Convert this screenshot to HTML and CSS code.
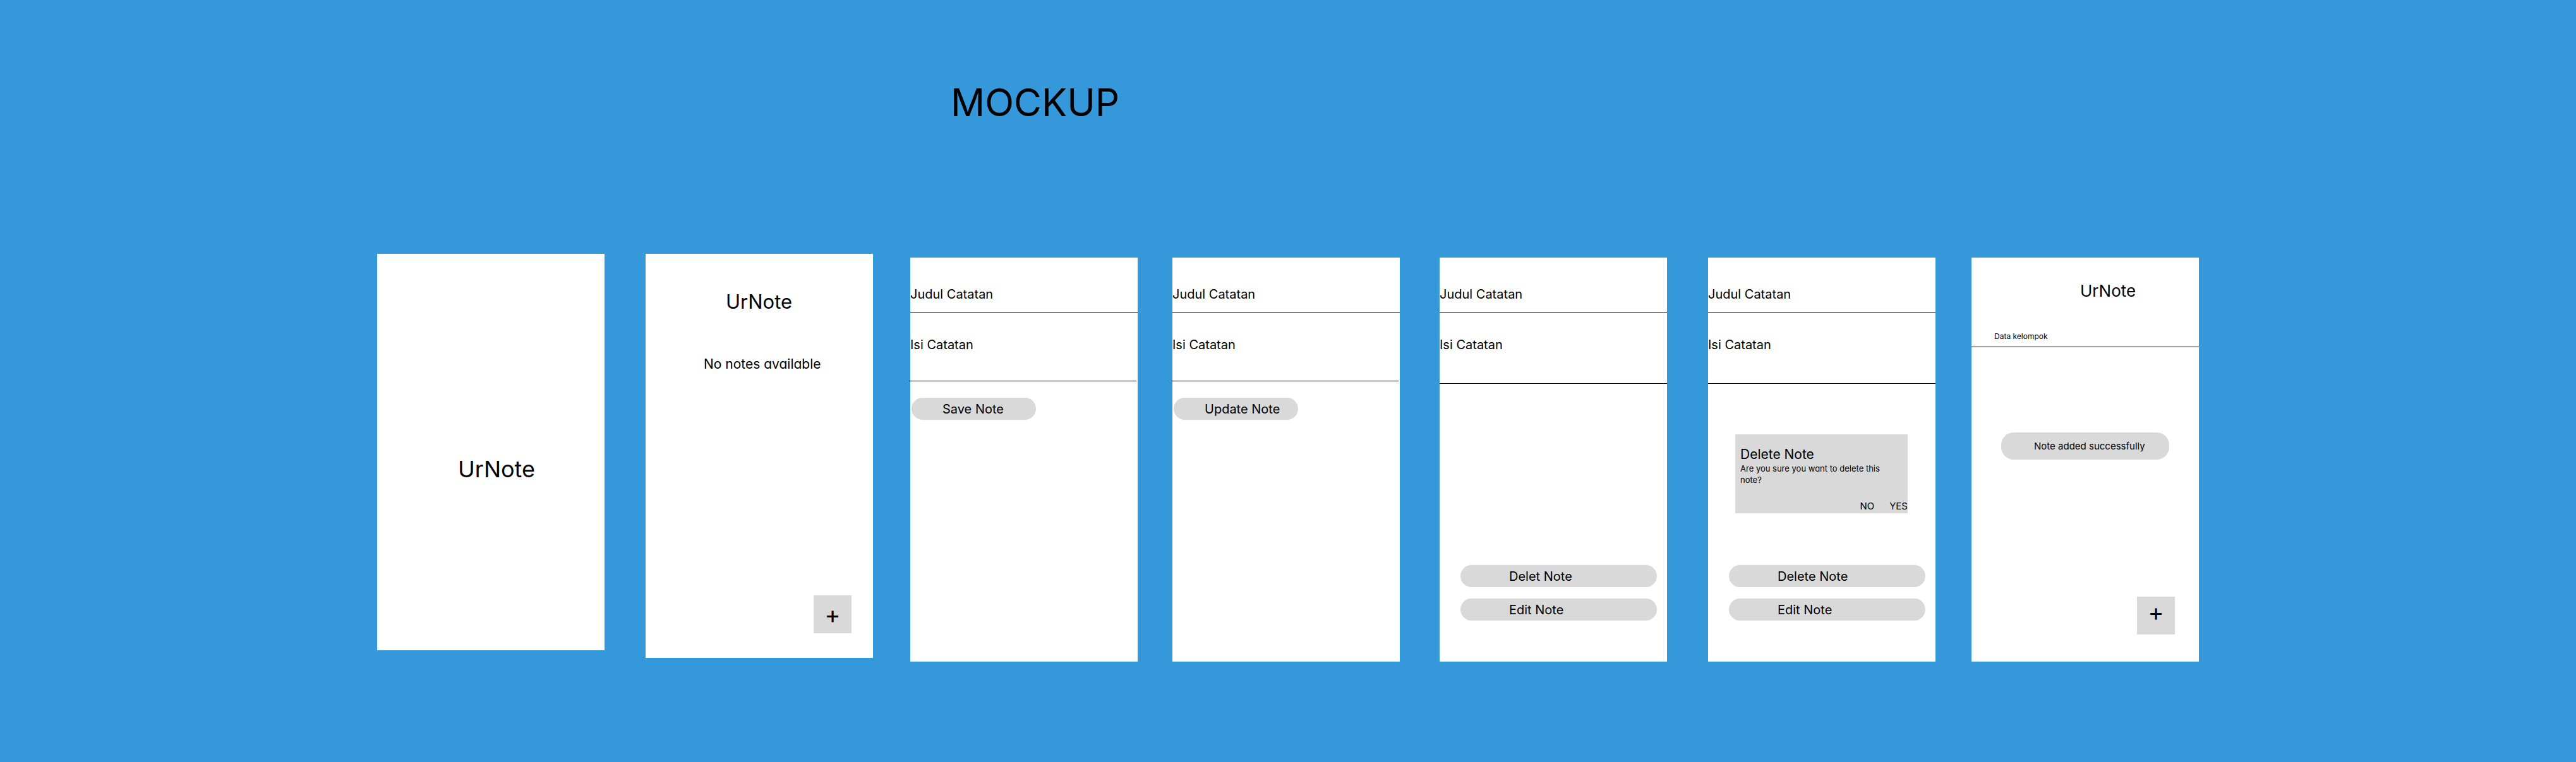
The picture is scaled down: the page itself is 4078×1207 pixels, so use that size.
FILE: index.html
```html
<!DOCTYPE html>
<html lang="id">
<head>
  <meta charset="utf-8">
  <meta name="viewport" content="width=device-width, initial-scale=1">
  <title>UrNote Mockup</title>
  <link rel="stylesheet" href="styles.css">
</head>
<body>
  <main class="board">
    <h1 class="board-title">MOCKUP</h1>

    <section class="screen screen-splash" aria-label="Splash">
      <h2 class="brand brand-large">UrNote</h2>
    </section>

    <section class="screen screen-home" aria-label="Home">
      <h2 class="brand brand-medium">UrNote</h2>
      <p class="empty-text">No notes available</p>
      <button class="add-button" type="button" aria-label="Add note">+</button>
    </section>

    <section class="screen screen-low" aria-label="Save note">
      <input class="field field-title" type="text" placeholder="Judul Catatan" aria-label="Judul Catatan">
      <input class="field field-body field-shifted" type="text" placeholder="Isi Catatan" aria-label="Isi Catatan">
      <button class="pill pill-short" type="button">Save Note</button>
    </section>

    <section class="screen screen-low" aria-label="Update note">
      <input class="field field-title" type="text" placeholder="Judul Catatan" aria-label="Judul Catatan">
      <input class="field field-body field-shifted" type="text" placeholder="Isi Catatan" aria-label="Isi Catatan">
      <button class="pill pill-short" type="button">Update Note</button>
    </section>

    <section class="screen screen-low" aria-label="Note actions">
      <input class="field field-title" type="text" placeholder="Judul Catatan" aria-label="Judul Catatan">
      <input class="field field-body field-tall" type="text" placeholder="Isi Catatan" aria-label="Isi Catatan">
      <div class="actions">
        <button class="pill" type="button">Delet Note</button>
        <button class="pill" type="button">Edit Note</button>
      </div>
    </section>

    <section class="screen screen-low" aria-label="Delete confirmation">
      <input class="field field-title" type="text" placeholder="Judul Catatan" aria-label="Judul Catatan">
      <input class="field field-body field-tall" type="text" placeholder="Isi Catatan" aria-label="Isi Catatan">
      <div class="dialog" role="dialog" aria-labelledby="dialog-title">
        <h3 class="dialog-title" id="dialog-title">Delete Note</h3>
        <p class="dialog-text">Are you sure you want to delete this note?</p>
        <div class="dialog-actions">
          <button class="dialog-button" type="button">NO</button>
          <button class="dialog-button" type="button">YES</button>
        </div>
      </div>
      <div class="actions">
        <button class="pill" type="button">Delete Note</button>
        <button class="pill" type="button">Edit Note</button>
      </div>
    </section>

    <section class="screen screen-low screen-list" aria-label="Note list">
      <h2 class="brand brand-small">UrNote</h2>
      <p class="list-item">Data kelompok</p>
      <p class="toast" role="status">Note added successfully</p>
      <button class="add-button add-button-raised" type="button" aria-label="Add note">+</button>
    </section>
  </main>
</body>
</html>
```
FILE: styles.css
```css
* {
  box-sizing: border-box;
}

body {
  margin: 0;
  min-height: 100vh;
  background: #3498db;
  color: #000;
  font-family: Inter, "Liberation Sans", sans-serif;
  font-size: 20px;
}

h1, h2, h3, p {
  margin: 0;
  font-weight: 400;
}

button, input {
  margin: 0;
  border: 0;
  border-radius: 0;
  color: inherit;
  font: inherit;
}

button {
  cursor: pointer;
}

.board {
  display: grid;
  grid-template-columns: 425px 419px 415px 423px 425px 417px 360px;
  justify-content: center;
  align-items: start;
  padding: 126px 0;
}

.board-title {
  grid-column: 3 / -1;
  margin-bottom: 204px;
  padding-left: 64px;
  font-size: 60px;
  line-height: 72px;
}

.screen {
  display: flex;
  flex-direction: column;
  width: 360px;
  min-height: 640px;
  background: #fff;
}

.screen-splash {
  grid-column: 1;
  min-height: 628px;
  padding: 319px 0 0 128px;
}

.screen-home {
  padding: 57px 34px 39px 92px;
}

.screen-low {
  margin-top: 6px;
}

.screen-list {
  padding: 37px 0 43px;
}

.brand-large {
  font-size: 36px;
  line-height: 44px;
}

.brand-medium {
  padding-left: 35px;
  font-size: 31px;
  line-height: 38px;
}

.brand-small {
  padding-left: 172px;
  font-size: 26px;
  line-height: 32px;
}

.empty-text {
  margin-top: 66px;
  font-size: 21px;
  line-height: 28px;
  font-feature-settings: "cv11";
}

.add-button {
  align-self: flex-end;
  width: 60px;
  height: 60px;
  margin-top: auto;
  padding: 0;
  background: #d9d9d9;
  font-size: 38px;
  line-height: 48px;
}

.add-button-raised {
  margin-right: 38px;
  padding-bottom: 12px;
}

.field {
  width: 100%;
  border-bottom: 1px solid #000;
  background: transparent;
  line-height: 24px;
}

.field::placeholder {
  color: #000;
  opacity: 1;
}

.field-title {
  height: 88px;
  padding: 46px 0 17px;
}

.field-body {
  height: 108px;
  padding: 38px 0 45px;
}

.field-tall {
  height: 112px;
  padding-bottom: 49px;
}

.field-shifted {
  margin-left: -2px;
  padding-left: 2px;
}

.pill {
  height: 35px;
  padding: 0 0 0 77px;
  border-radius: 20px;
  background: #d9d9d9;
  text-align: left;
}

.pill-short {
  width: 197px;
  margin: 26px 0 0 2px;
  padding-left: 49px;
}

.actions {
  display: flex;
  flex-direction: column;
  gap: 18px;
  margin-top: auto;
  padding: 0 16px 65px 33px;
}

.dialog {
  display: flex;
  flex-direction: column;
  min-height: 125px;
  margin: 80px 44px 0 43px;
  padding: 19px 0 2px 8px;
  background: #d9d9d9;
  font-feature-settings: "cv11";
}

.dialog-title {
  font-size: 21px;
  line-height: 26px;
}

.dialog-text {
  padding-right: 40px;
  font-size: 13px;
  line-height: 18px;
}

.dialog-actions {
  display: flex;
  justify-content: flex-end;
  gap: 24px;
  margin-top: auto;
}

.dialog-button {
  padding: 0;
  background: transparent;
  font-size: 15px;
  line-height: 18px;
}

.list-item {
  margin-top: 48px;
  padding: 0 0 8px 36px;
  border-bottom: 1px solid #000;
  font-size: 12px;
  line-height: 16px;
}

.toast {
  margin: 135px 47px 0;
  padding-left: 52px;
  border-radius: 20px;
  background: #d9d9d9;
  font-size: 15px;
  line-height: 43px;
}
```
